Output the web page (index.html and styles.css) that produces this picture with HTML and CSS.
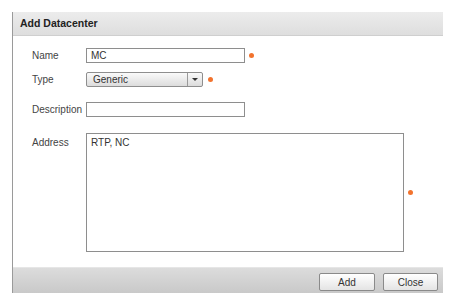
FILE: index.html
```html
<!DOCTYPE html>
<html lang="en">
<head>
    <meta charset="UTF-8">
    <meta name="viewport" content="width=device-width, initial-scale=1.0">
    <title>Add Datacenter</title>
    <link rel="stylesheet" href="styles.css">
</head>
<body>
    <div class="dialog">
        <div class="dialog-header">Add Datacenter</div>
        <form class="dialog-body">
            <div class="row row-name">
                <label for="dc_name">Name</label>
                <input type="text" id="dc_name" class="field" value="MC">
                <span class="required"></span>
            </div>
            <div class="row row-type">
                <label>Type</label>
                <div class="select">
                    <span class="select-value">Generic</span>
                    <span class="select-arrow"></span>
                </div>
                <span class="required"></span>
            </div>
            <div class="row row-desc">
                <label for="dc_desc">Description</label>
                <input type="text" id="dc_desc" class="field">
            </div>
            <div class="row row-address">
                <label for="dc_address">Address</label>
                <textarea id="dc_address" class="area">RTP, NC</textarea>
                <span class="required"></span>
            </div>
        </form>
        <div class="dialog-footer">
            <button type="button" class="btn btn-add">Add</button>
            <button type="button" class="btn btn-close">Close</button>
        </div>
    </div>
</body>
</html>
```

FILE: styles.css
```css
body {
    margin: 0;
    padding: 12px 0 0 12px;
    background-color: #fff;
    font-family: "Liberation Sans", Arial, sans-serif;
    font-size: 10px;
    color: #333;
}
.dialog {
    width: 430px;
    height: 281px;
    border-left: 1px solid #9a9a9a;
    display: flex;
    flex-direction: column;
}
.dialog-header {
    height: 23px;
    line-height: 23px;
    padding-left: 7px;
    background: linear-gradient(#ececec, #dedede);
    border-bottom: 1px solid #cfcfcf;
    font-weight: bold;
    font-size: 10.5px;
    color: #222;
}
.dialog-body {
    flex: 1;
    margin: 0;
    padding: 12px 0 0 19px;
    display: flex;
    flex-direction: column;
}
.row {
    display: flex;
    align-items: center;
}
.row label {
    width: 54px;
    color: #444;
}
.row-type {
    margin-top: 9px;
}
.row-desc {
    margin-top: 15px;
}
.row-address {
    margin-top: 16px;
    align-items: flex-start;
}
.row-address label {
    padding-top: 4px;
}
.field {
    box-sizing: border-box;
    width: 159px;
    height: 15px;
    padding: 0 4px;
    border: 1px solid #8e8e8e;
    border-radius: 0;
    font-family: inherit;
    font-size: 10px;
    color: #333;
    outline: none;
}
.select {
    box-sizing: border-box;
    width: 117px;
    height: 15px;
    border: 1px solid #8e8e8e;
    border-radius: 2px;
    background: linear-gradient(#fafafa, #dcdcdc);
    display: flex;
}
.select-value {
    flex: 1;
    padding-left: 6px;
    line-height: 13px;
}
.select-arrow {
    width: 14px;
    border-left: 1px solid #9a9a9a;
    position: relative;
}
.select-arrow::after {
    content: "";
    position: absolute;
    left: 4px;
    top: 5px;
    border-left: 3px solid transparent;
    border-right: 3px solid transparent;
    border-top: 3px solid #333;
}
.area {
    box-sizing: border-box;
    width: 318px;
    height: 119px;
    padding: 3px 4px;
    border: 1px solid #8e8e8e;
    border-radius: 0;
    resize: none;
    font-family: inherit;
    font-size: 10px;
    color: #333;
    outline: none;
}
.required {
    width: 5px;
    height: 5px;
    margin-left: 4px;
    border-radius: 50%;
    background-color: #f2732e;
}
.row-type .required {
    margin-left: 5px;
}
.row-address .required {
    margin-top: 57px;
    margin-left: 4px;
}
.dialog-footer {
    height: 26px;
    border-top: 1px solid #e6e6e6;
    background: linear-gradient(#dcdcdc, #c9c9c9);
    display: flex;
    justify-content: flex-end;
    align-items: center;
    gap: 8px;
    padding-right: 5px;
    padding-top: 3px;
    box-sizing: border-box;
}
.btn {
    height: 18px;
    padding: 0;
    border: 1px solid #8a8a8a;
    border-radius: 2px;
    background: linear-gradient(#ffffff, #e4e4e4);
    font-family: inherit;
    font-size: 10px;
    color: #333;
    cursor: pointer;
}
.btn-add {
    width: 56px;
}
.btn-close {
    width: 55px;
}
```
